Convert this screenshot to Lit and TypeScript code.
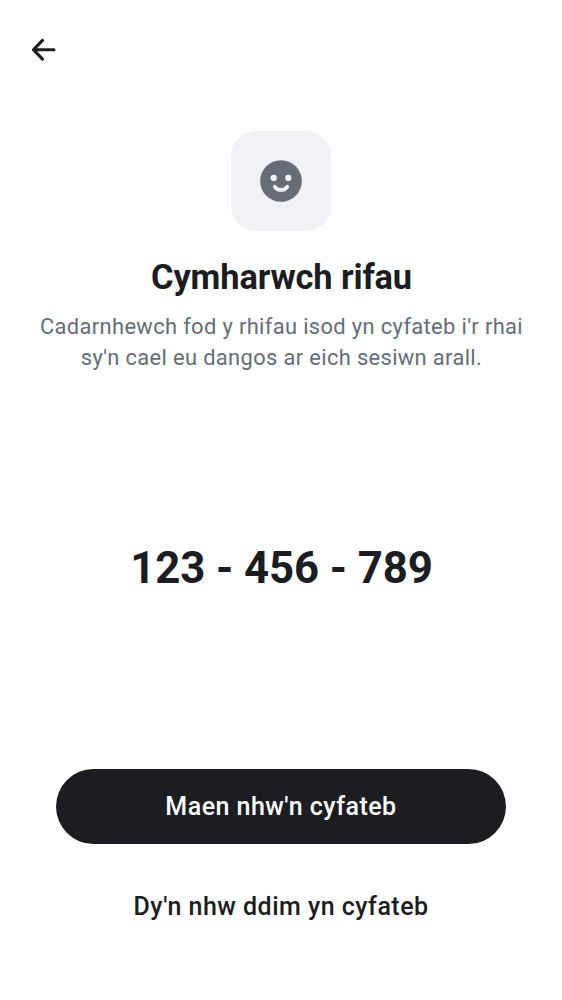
import { LitElement, html, css } from "lit";
import { customElement } from "lit/decorators.js";

@customElement("app-root")
class AppRoot extends LitElement {
  static styles = css`
    :host { display: flex; flex-direction: column; box-sizing: border-box; height: 1000px; background: #fff; color: #1b1d22; font-family: Roboto, sans-serif; overflow: hidden; }
    .bar { height: 100px; box-sizing: border-box; padding: 31px 0 0 25px; }
    .bar svg { display: block; }
    header { display: flex; flex-direction: column; align-items: center; padding-top: 31px; text-align: center; }
    .tile { width: 100px; height: 100px; border-radius: 25px; background: #f0f2f5; display: grid; place-items: center; }
    h1 { margin: 24px 0 0; padding-left: 1px; font-size: 34.4px; line-height: 44px; font-weight: 700; letter-spacing: -0.12px; white-space: nowrap; }
    p { margin: 12px 0 0; padding-left: 1px; font-size: 21.9px; line-height: 31.25px; letter-spacing: 0.35px; color: #656d77; white-space: nowrap; }
    .code { flex: 1; display: flex; justify-content: center; padding: 166px 0 0 1px; font-size: 43.75px; line-height: 56px; font-weight: 700; letter-spacing: -0.08px; white-space: nowrap; }
    footer { display: flex; flex-direction: column; align-items: center; gap: 25px; padding-bottom: 56px; }
    button { border: 0; padding: 0; width: 450px; height: 75px; border-radius: 38px; font: 500 25px/37.5px Roboto, sans-serif; letter-spacing: 0.47px; background: #1b1d22; color: #fff; white-space: nowrap; }
    .plain { background: none; color: #1b1d22; }
  `;
  render() {
    return html`
      <nav class="bar"><svg width="37.5" height="37.5" viewBox="0 0 24 24" fill="none" stroke="#1b1d22" stroke-width="2" stroke-linecap="round" stroke-linejoin="round"><path d="M11.2 6 5.4 12l5.8 6M5.4 12H18.5"/></svg></nav>
      <header>
        <div class="tile"><svg width="50" height="50" viewBox="0 0 24 24"><circle cx="12" cy="12" r="10" fill="#656d77"/><circle cx="8.5" cy="10.5" r="1.5" fill="#f0f2f5"/><circle cx="15.5" cy="10.5" r="1.5" fill="#f0f2f5"/><path d="M9 14.8C10.5 16.8 13.5 16.8 15 14.8" fill="none" stroke="#f0f2f5" stroke-width="1.8" stroke-linecap="round"/></svg></div>
        <h1>Cymharwch rifau</h1>
        <p>Cadarnhewch fod y rhifau isod yn cyfateb i'r rhai<br>sy'n cael eu dangos ar eich sesiwn arall.</p>
      </header>
      <main class="code">123 - 456 - 789</main>
      <footer><button>Maen nhw'n cyfateb</button><button class="plain">Dy'n nhw ddim yn cyfateb</button></footer>
    `;
  }
}
